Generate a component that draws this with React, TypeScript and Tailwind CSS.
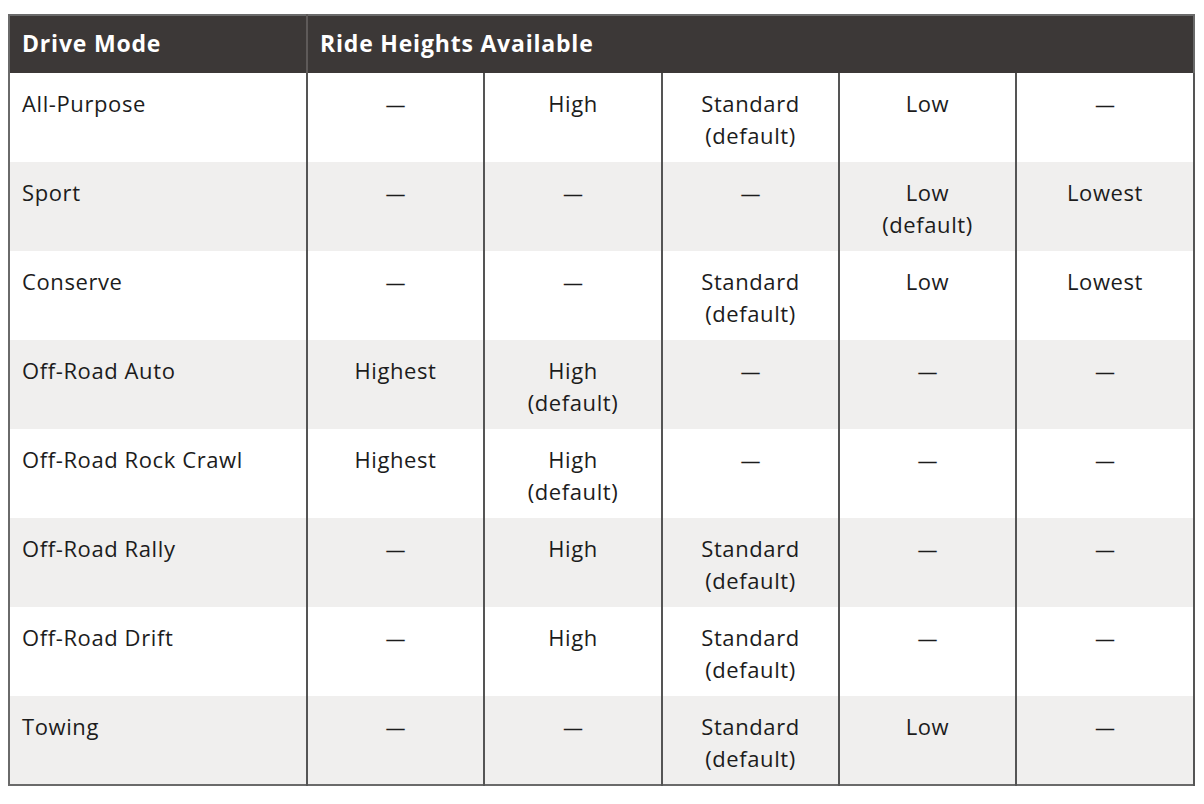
const D = "—";

const rows: { mode: string; cells: string[] }[] = [
  { mode: "All-Purpose", cells: [D, "High", "Standard\n(default)", "Low", D] },
  { mode: "Sport", cells: [D, D, D, "Low\n(default)", "Lowest"] },
  { mode: "Conserve", cells: [D, D, "Standard\n(default)", "Low", "Lowest"] },
  { mode: "Off-Road Auto", cells: ["Highest", "High\n(default)", D, D, D] },
  { mode: "Off-Road Rock Crawl", cells: ["Highest", "High\n(default)", D, D, D] },
  { mode: "Off-Road Rally", cells: [D, "High", "Standard\n(default)", D, D] },
  { mode: "Off-Road Drift", cells: [D, "High", "Standard\n(default)", D, D] },
  { mode: "Towing", cells: [D, D, "Standard\n(default)", "Low", D] },
];

export default function App() {
  return (
    <div
      className="min-h-screen bg-white pt-[14px] pl-[8px]"
      style={{ fontFamily: "'Open Sans', Arial, sans-serif" }}
    >
      <table className="w-[1187px] table-fixed border-collapse border-2 border-[#6a6a6a] text-[22px] leading-[32px] tracking-[0.6px] text-[#1c1c1c]">
        <colgroup>
          <col className="w-[298px]" />
          <col className="w-[177px]" />
          <col className="w-[178px]" />
          <col className="w-[177px]" />
          <col className="w-[177px]" />
          <col />
        </colgroup>
        <thead>
          <tr className="h-[58px] bg-[#3c3837] text-white">
            <th className="border-r-2 border-[#5e5a59] px-[12px] pb-[3px] text-left text-[23px] font-bold tracking-[0.8px]">
              Drive Mode
            </th>
            <th colSpan={5} className="px-[12px] pb-[3px] text-left text-[23px] font-bold tracking-[0.8px]">
              Ride Heights Available
            </th>
          </tr>
        </thead>
        <tbody>
          {rows.map((row, i) => (
            <tr key={row.mode} className={i % 2 === 0 ? "h-[89px] bg-white" : "h-[89px] bg-[#f0efee]"}>
              <td className="border-r-2 border-[#555] px-[12px] pt-[14px] align-top">{row.mode}</td>
              {row.cells.map((c, j) => (
                <td
                  key={j}
                  className="border-r-2 border-[#555] px-2 pt-[14px] text-center align-top whitespace-pre-line"
                >
                  {c === D ? <span className="text-[20px] tracking-normal">{D}</span> : c}
                </td>
              ))}
            </tr>
          ))}
        </tbody>
      </table>
    </div>
  );
}
